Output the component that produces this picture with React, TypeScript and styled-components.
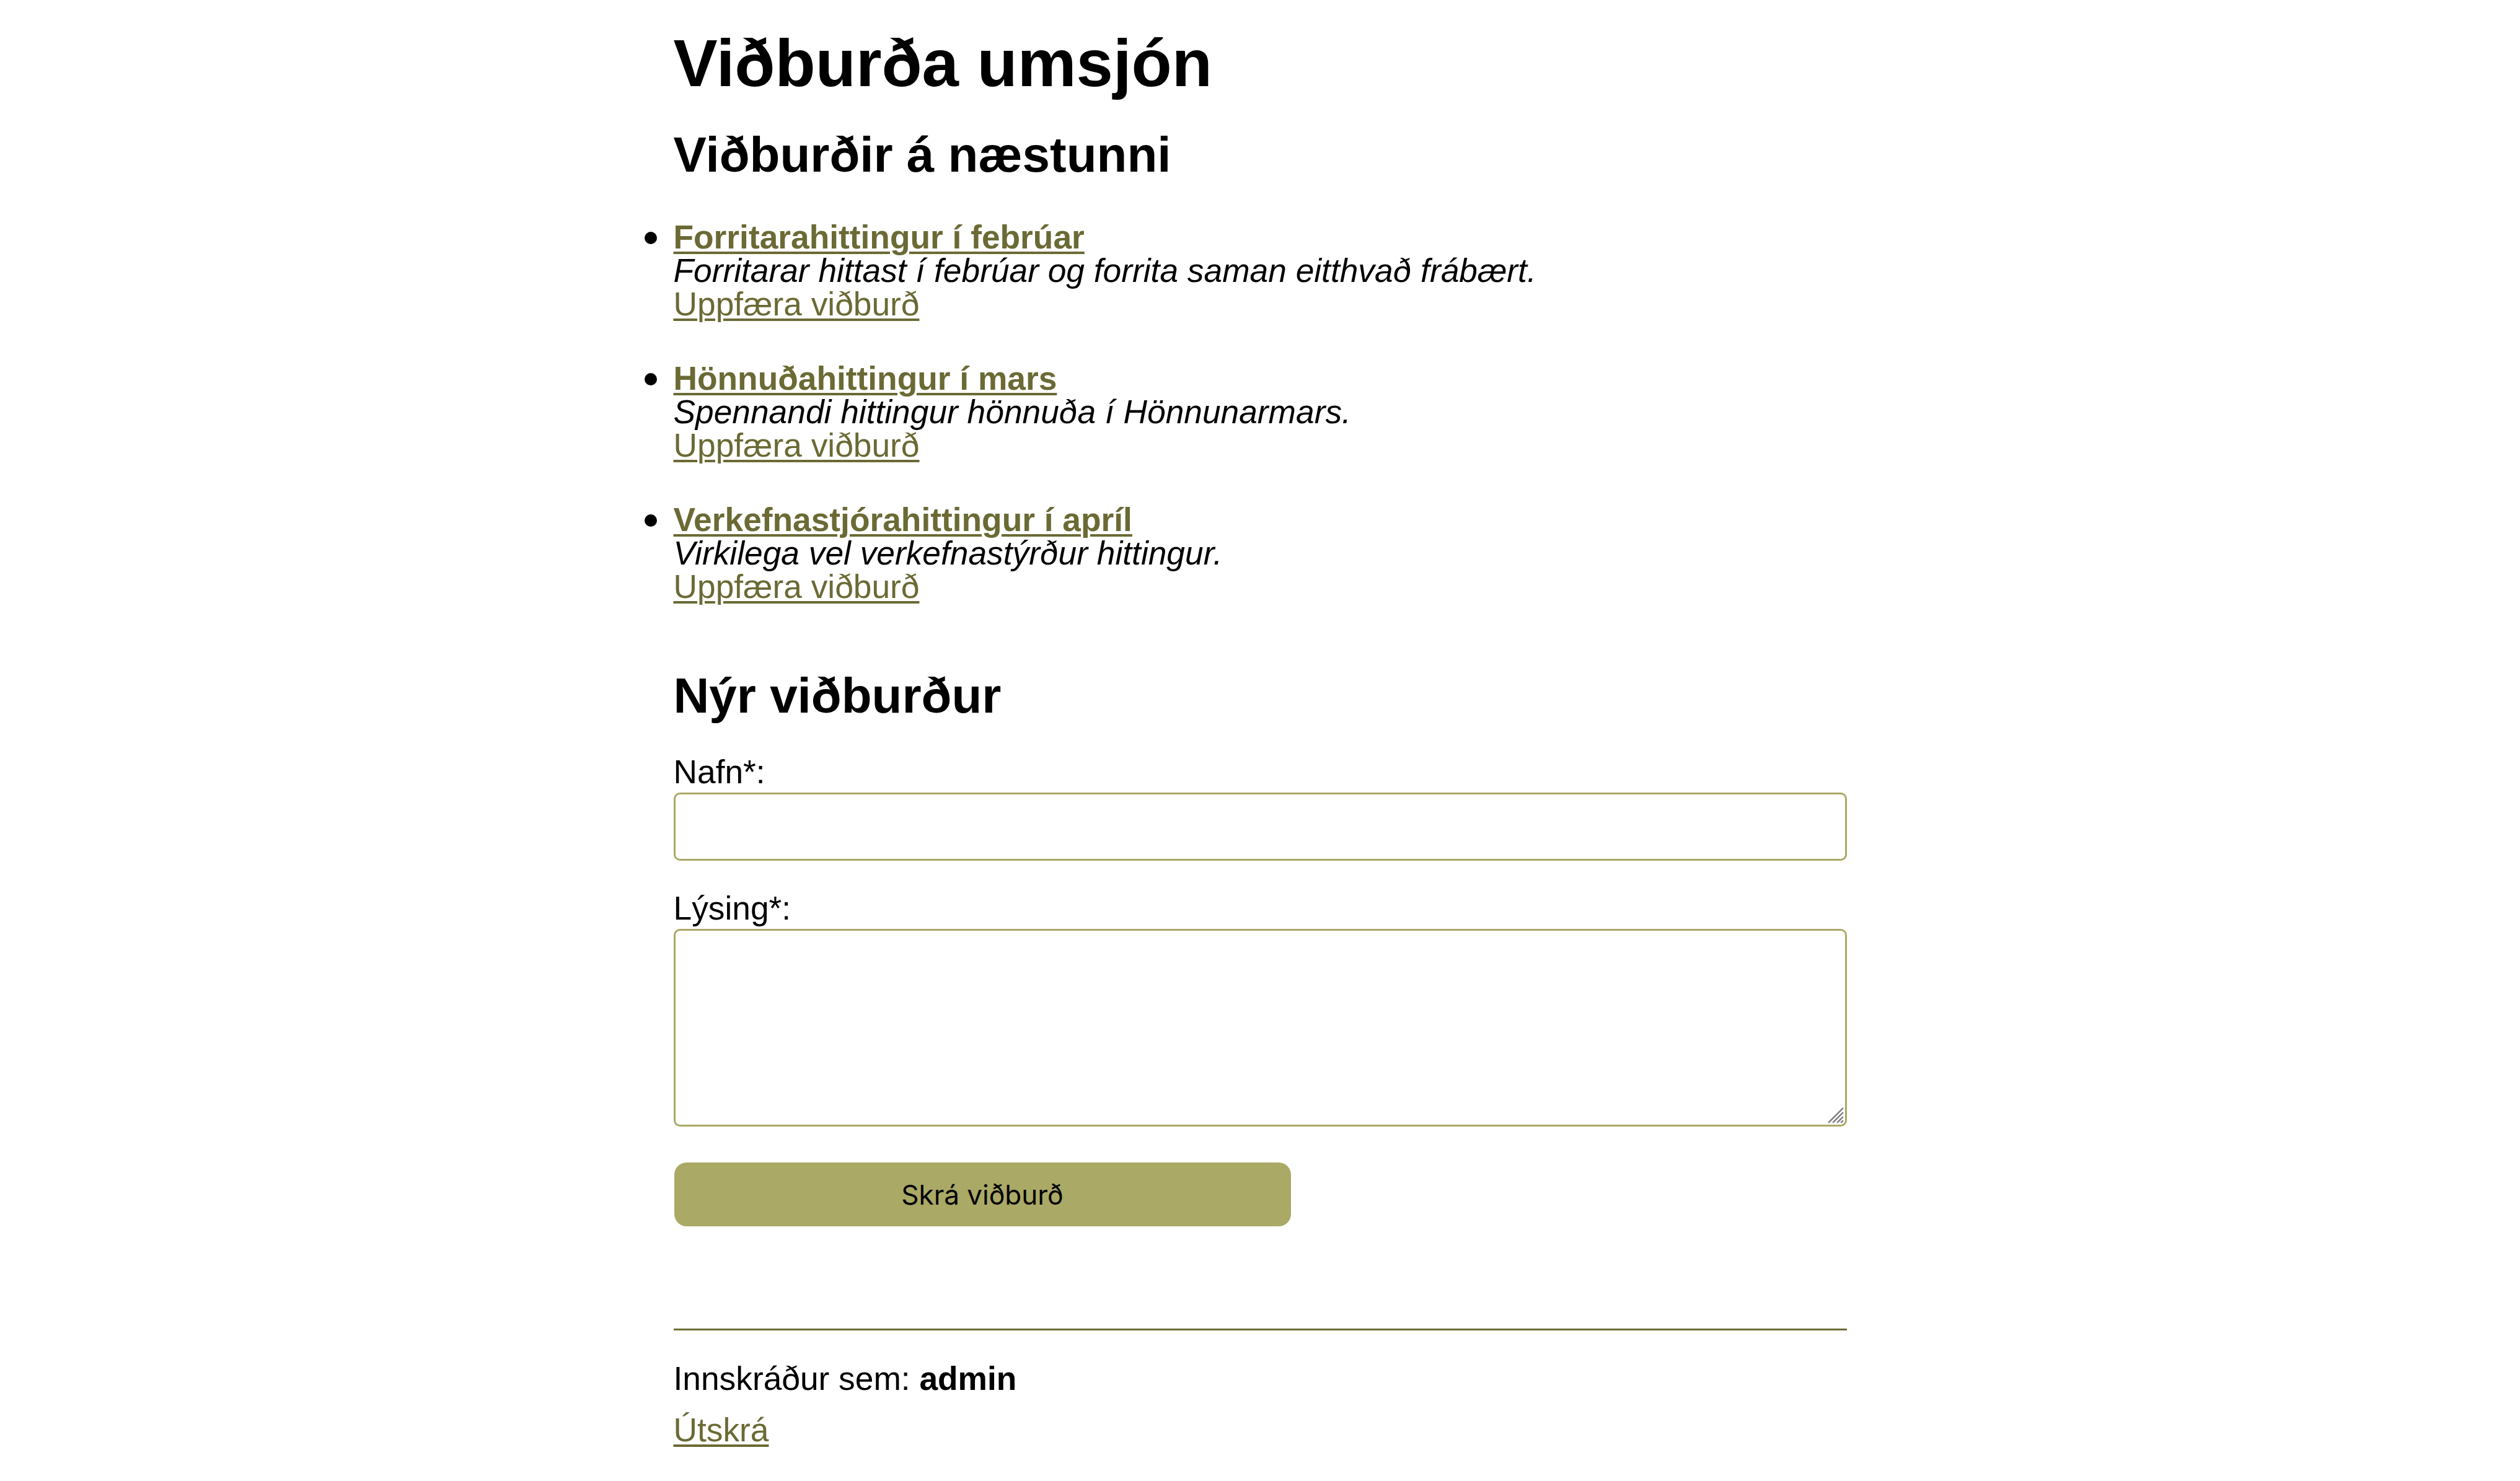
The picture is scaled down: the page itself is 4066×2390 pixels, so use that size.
import React from "react";
import styled, { createGlobalStyle } from "styled-components";

const GlobalStyle = createGlobalStyle`
  html, body {
    margin: 0;
    padding: 0;
    background: #ffffff;
  }
  body {
    font-family: "Liberation Sans", Arial, Helvetica, sans-serif;
    font-size: 53.3px;
    color: #000000;
  }
`;

const olive = "#6b6a35";
const oliveLight = "#aaa966";

const Page = styled.main`
  width: 1893px;
  margin: 0 auto;
  padding: 42px 0 60px;
  display: flex;
  flex-direction: column;
`;

const Title = styled.h1`
  margin: 0;
  font-size: 106.7px;
  line-height: 120px;
  font-weight: 700;
`;

const SectionTitle = styled.h2<{ $top: number }>`
  margin: ${(p) => p.$top}px 0 0;
  font-size: 80px;
  line-height: 92px;
  font-weight: 700;
`;

const EventList = styled.ul`
  margin: 60px 0 0;
  padding: 0;
  display: flex;
  flex-direction: column;
  gap: 66px;
`;

const EventItem = styled.li`
  display: flex;
  flex-direction: column;
  font-size: 53.3px;
  line-height: 54px;
  position: relative;
  list-style: none;

  &::before {
    content: "";
    position: absolute;
    left: -47px;
    top: 18px;
    width: 20px;
    height: 20px;
    border-radius: 50%;
    background: #000;
  }
`;

const Link = styled.a<{ $bold?: boolean }>`
  color: ${olive};
  text-decoration: underline;
  text-decoration-thickness: 4px;
  text-underline-offset: 5px;
  font-weight: ${(p) => (p.$bold ? 700 : 400)};
  align-self: flex-start;
  cursor: pointer;
`;

const Description = styled.span`
  font-style: italic;
`;

const Form = styled.form`
  display: flex;
  flex-direction: column;
  margin-top: 50px;
`;

const Label = styled.label<{ $top?: number }>`
  display: block;
  font-size: 53.3px;
  line-height: 54px;
  margin-top: ${(p) => p.$top ?? 0}px;
`;

const TextInput = styled.input`
  box-sizing: border-box;
  width: 100%;
  height: 110px;
  margin-top: 6px;
  border: 3px solid ${oliveLight};
  border-radius: 10px;
  padding: 0 14px;
  font-family: "Liberation Sans", Arial, sans-serif;
  font-size: 53.3px;
  outline: none;
  background: #fff;
`;

const AreaWrap = styled.div`
  position: relative;
  margin-top: 6px;
`;

const TextArea = styled.textarea`
  box-sizing: border-box;
  width: 100%;
  height: 319px;
  border: 3px solid ${oliveLight};
  border-radius: 10px;
  padding: 14px;
  font-family: "Liberation Sans", Arial, sans-serif;
  font-size: 53.3px;
  outline: none;
  resize: none;
  background: #fff;
  display: block;
`;

const ResizeGrip = styled.svg`
  position: absolute;
  right: 5px;
  bottom: 5px;
  width: 26px;
  height: 26px;
  pointer-events: none;
`;

const SubmitButton = styled.button`
  margin-top: 58px;
  width: 995px;
  height: 103px;
  margin-left: 1px;
  border: none;
  border-radius: 20px;
  background: ${oliveLight};
  color: #000;
  font-family: Inter, "Noto Sans", sans-serif;
  font-size: 44px;
  display: flex;
  align-items: center;
  justify-content: center;
  cursor: pointer;
`;

const Footer = styled.footer`
  margin-top: 165px;
  border-top: 3px solid ${olive};
  padding-top: 51px;
  display: flex;
  flex-direction: column;
  gap: 29px;
  font-size: 53.3px;
  line-height: 54px;
`;

const UserLine = styled.p`
  margin: 0;
`;

const events = [
  {
    title: "Forritarahittingur í febrúar",
    description: "Forritarar hittast í febrúar og forrita saman eitthvað frábært.",
  },
  {
    title: "Hönnuðahittingur í mars",
    description: "Spennandi hittingur hönnuða í Hönnunarmars.",
  },
  {
    title: "Verkefnastjórahittingur í apríl",
    description: "Virkilega vel verkefnastýrður hittingur.",
  },
];

export default function App() {
  return (
    <>
      <GlobalStyle />
      <Page>
        <Title>Viðburða umsjón</Title>
        <SectionTitle $top={42}>Viðburðir á næstunni</SectionTitle>
        <EventList>
          {events.map((e) => (
            <EventItem key={e.title}>
              <Link $bold href="#">
                {e.title}
              </Link>
              <Description>{e.description}</Description>
              <Link href="#">Uppfæra viðburð</Link>
            </EventItem>
          ))}
        </EventList>
        <SectionTitle $top={103}>Nýr viðburður</SectionTitle>
        <Form onSubmit={(ev) => ev.preventDefault()}>
          <Label htmlFor="name">Nafn*:</Label>
          <TextInput id="name" type="text" />
          <Label htmlFor="desc" $top={50}>
            Lýsing*:
          </Label>
          <AreaWrap>
            <TextArea id="desc" />
            <ResizeGrip viewBox="0 0 26 26" aria-hidden="true">
              <g stroke="#808080" strokeWidth="2.5" strokeLinecap="square">
                <line x1="2" y1="24" x2="24" y2="2" />
                <line x1="9" y1="24" x2="24" y2="9" />
                <line x1="16" y1="24" x2="24" y2="16" />
                <line x1="22" y1="24" x2="24" y2="22" />
              </g>
            </ResizeGrip>
          </AreaWrap>
          <SubmitButton type="submit">Skrá viðburð</SubmitButton>
        </Form>
        <Footer>
          <UserLine>
            Innskráður sem: <strong>admin</strong>
          </UserLine>
          <Link href="#">Útskrá</Link>
        </Footer>
      </Page>
    </>
  );
}
